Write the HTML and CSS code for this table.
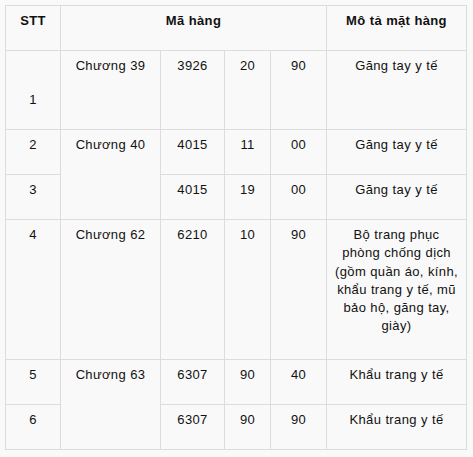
FILE: index.html
```html
<!DOCTYPE html>
<html lang="vi">
<head>
<meta charset="utf-8">
<title>Danh mục mặt hàng</title>
<link rel="stylesheet" href="styles.css">
</head>
<body>
<div class="page">
  <table class="goods">
    <colgroup>
      <col class="c-stt">
      <col class="c-chuong">
      <col class="c-code">
      <col class="c-sub1">
      <col class="c-sub2">
      <col class="c-desc">
    </colgroup>
    <thead>
      <tr class="row-head">
        <th>STT</th>
        <th colspan="4">Mã hàng</th>
        <th>Mô tả mặt hàng</th>
      </tr>
    </thead>
    <tbody>
      <tr class="row-first">
        <td class="cell-bottom">1</td>
        <td>Chương 39</td>
        <td>3926</td>
        <td>20</td>
        <td>90</td>
        <td>Găng tay y tế</td>
      </tr>
      <tr class="row-std">
        <td>2</td>
        <td rowspan="2">Chương 40</td>
        <td>4015</td>
        <td>11</td>
        <td>00</td>
        <td>Găng tay y tế</td>
      </tr>
      <tr class="row-std">
        <td>3</td>
        <td>4015</td>
        <td>19</td>
        <td>00</td>
        <td>Găng tay y tế</td>
      </tr>
      <tr class="row-tall">
        <td>4</td>
        <td>Chương 62</td>
        <td>6210</td>
        <td>10</td>
        <td>90</td>
        <td>Bộ trang phục phòng chống dịch (gồm quần áo, kính, khẩu trang y tế, mũ bảo hộ, găng tay, giày)</td>
      </tr>
      <tr class="row-std">
        <td>5</td>
        <td rowspan="2">Chương 63</td>
        <td>6307</td>
        <td>90</td>
        <td>40</td>
        <td>Khẩu trang y tế</td>
      </tr>
      <tr class="row-std">
        <td>6</td>
        <td>6307</td>
        <td>90</td>
        <td>90</td>
        <td>Khẩu trang y tế</td>
      </tr>
    </tbody>
  </table>
</div>
</body>
</html>
```
FILE: styles.css
```css
html, body {
  margin: 0;
  padding: 0;
  background: #f9f9f9;
}

.page {
  padding: 5px;
  font-family: "Liberation Sans", Arial, sans-serif;
  font-size: 13px;
  letter-spacing: 0.35px;
  word-spacing: 0.2px;
  color: #111;
}

.goods {
  border-collapse: collapse;
  table-layout: fixed;
  width: 462px;
}

.c-stt { width: 55px; }
.c-chuong { width: 100px; }
.c-code { width: 64px; }
.c-sub1 { width: 46px; }
.c-sub2 { width: 56px; }
.c-desc { width: 140px; }

.goods th,
.goods td {
  border: 1px solid #dcdcdc;
  padding: 6px 7px 0;
  line-height: 18.3px;
  text-align: center;
  vertical-align: top;
}

.goods th {
  font-weight: bold;
}

.row-head { height: 45px; }
.row-first { height: 79px; }
.row-std { height: 45px; }
.row-tall { height: 140px; }

.goods td.cell-bottom {
  vertical-align: bottom;
  padding-bottom: 20px;
}
```
